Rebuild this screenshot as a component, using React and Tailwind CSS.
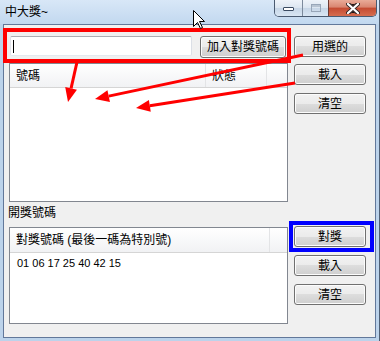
const btn =
  "flex items-center justify-center rounded-[3px] border border-[#707070] bg-[linear-gradient(to_bottom,#f2f2f2_0%,#ebebeb_50%,#dddddd_50%,#cfcfcf_100%)] shadow-[inset_0_0_0_1px_#fcfcfc] text-[12px] leading-none text-black";

function arrowHead(x1, y1, x2, y2, len = 14, half = 6) {
  const dx = x2 - x1;
  const dy = y2 - y1;
  const d = Math.sqrt(dx * dx + dy * dy);
  const ux = dx / d;
  const uy = dy / d;
  const bx = x2 - ux * len;
  const by = y2 - uy * len;
  return {
    base: [bx, by],
    points: `${x2},${y2} ${bx - uy * half},${by + ux * half} ${bx + uy * half},${by - ux * half}`,
  };
}

function Arrow({ from, to }) {
  const head = arrowHead(from[0], from[1], to[0], to[1]);
  return (
    <g>
      <line
        x1={from[0]}
        y1={from[1]}
        x2={head.base[0]}
        y2={head.base[1]}
        stroke="#ff0000"
        strokeWidth="3"
      />
      <polygon points={head.points} fill="#ff0000" />
    </g>
  );
}

function Annotations() {
  return (
    <svg
      className="pointer-events-none absolute left-0 top-0"
      width="380"
      height="341"
      viewBox="0 0 380 341"
    >
      <rect x="5" y="30" width="284" height="31" fill="none" stroke="#ff0000" strokeWidth="4" />
      <rect x="291" y="223" width="81" height="27" fill="none" stroke="#0000ff" strokeWidth="4" />
      <Arrow from={[77, 62]} to={[68, 102]} />
      <Arrow from={[303, 55]} to={[95, 99]} />
      <Arrow from={[295, 83]} to={[136, 108]} />
      {/* mouse pointer */}
      <path
        d="M193.5 10.5 L193.5 26.5 L197.5 22.5 L200.5 28.5 L202.5 27.5 L199.5 21.5 L204.5 21.5 Z"
        fill="#ffffff"
        stroke="#000000"
        strokeWidth="1"
        strokeLinejoin="round"
      />
    </svg>
  );
}

function TitleButtons() {
  return (
    <div className="ml-auto mr-[2px] flex h-[17px] self-start overflow-hidden rounded-b-[5px] border border-t-0 border-[#4a5a70]">
      <div className="flex w-[27px] items-end justify-center bg-[linear-gradient(to_bottom,#eef3f9_0%,#dbe5f0_50%,#c6d5e6_50%,#d9e6f3_100%)] pb-[5px]">
        <div className="h-[4px] w-[11px] rounded-[1px] border border-[#3b4b61] bg-white" />
      </div>
      <div className="flex w-[26px] items-center justify-center border-l border-[#7c8a9c] bg-[linear-gradient(to_bottom,#eef3f9_0%,#dbe5f0_50%,#c6d5e6_50%,#d9e6f3_100%)]">
        <div className="h-[8px] w-[10px] border border-[#98a6b8] shadow-[inset_0_2px_0_#b8c4d2]" />
      </div>
      <div className="flex w-[48px] items-center justify-center border-l border-[#6a3a34] bg-[linear-gradient(to_bottom,#e9ab98_0%,#d98570_45%,#c44a31_50%,#d66d4f_100%)]">
        <svg width="14" height="11" viewBox="0 0 14 11">
          <path
            d="M2 1 L7 4.2 L12 1 M2 10 L7 6.8 L12 10 M2 1 L12 10 M12 1 L2 10"
            stroke="#3a2a28"
            strokeWidth="4"
            strokeLinecap="round"
          />
          <path d="M2 1 L12 10 M12 1 L2 10" stroke="#ffffff" strokeWidth="2.2" strokeLinecap="round" />
        </svg>
      </div>
    </div>
  );
}

export default function App() {
  return (
    <div className="relative flex h-[341px] w-[380px] flex-col overflow-hidden border-r border-[#4f5f75] bg-[#bcd3eb] font-[family-name:'Liberation_Sans','Noto_Sans_CJK_TC',sans-serif]">
      <div className="flex h-[24px] bg-[linear-gradient(to_bottom,#d8e7f7,#c2d8ef)]">
        <div className="flex items-center pl-[5px] text-[12px] text-black">中大獎~</div>
        <TitleButtons />
      </div>

      <div className="flex-1 px-[3px] pb-[3px]">
        <div className="h-full border border-[#62789a] bg-[#f0f0f0] pl-[5px] pt-[11px]">
          {/* top section */}
          <div className="flex gap-[6px]">
            <div className="w-[279px]">
              <div className="flex items-start">
                <div className="ml-px flex h-[20px] w-[182px] items-center rounded-[2px] border border-[#abadb3] border-b-[#e3e9ef] border-l-[#e2e3ea] border-r-[#dbdfe6] bg-white pl-[2px]">
                  <span className="h-[13px] w-px bg-black" />
                </div>
                <button className={`${btn} ml-[8px] h-[22px] w-[86px]`}>加入對獎號碼</button>
              </div>
              <div className="mt-[5px] h-[139px] border border-[#828790] bg-white">
                <div className="flex h-[24px] border-b border-[#d5d5d5] bg-[linear-gradient(to_bottom,#ffffff,#f1f2f4)] text-[12px] text-black">
                  <div className="flex w-[196px] items-center border-r border-[#e3e4e6] pl-[6px]">號碼</div>
                  <div className="flex w-[61px] items-center border-r border-[#e3e4e6] pl-[6px]">狀態</div>
                  <div className="flex-1" />
                </div>
              </div>
            </div>
            <div className="flex flex-col">
              <button className={`${btn} h-[21px] w-[72px]`}>用選的</button>
              <button className={`${btn} mt-[7px] h-[21px] w-[72px]`}>載入</button>
              <button className={`${btn} mt-[8px] h-[21px] w-[72px]`}>清空</button>
            </div>
          </div>

          {/* bottom section */}
          <div className="flex gap-[6px]">
            <div className="w-[279px]">
              <div className="-ml-px mt-[3px] flex h-[16px] items-center text-[12px] text-black">開獎號碼</div>
              <div className="mt-[6px] h-[97px] border border-[#828790] bg-white">
                <div className="flex h-[25px] border-b border-[#d5d5d5] bg-[linear-gradient(to_bottom,#ffffff,#f1f2f4)] text-[12px] text-black">
                  <div className="flex w-[260px] items-center border-r border-[#e3e4e6] pl-[6px]">
                    對獎號碼 (最後一碼為特別號)
                  </div>
                  <div className="flex-1" />
                </div>
                <div className="flex h-[20px] items-center pl-[7px] text-[11px] text-black">
                  01 06 17 25 40 42 15
                </div>
              </div>
            </div>
            <div className="flex flex-col pt-[24px]">
              <button className={`${btn} h-[21px] w-[72px]`}>對獎</button>
              <button className={`${btn} mt-[8px] h-[21px] w-[72px]`}>載入</button>
              <button className={`${btn} mt-[8px] h-[21px] w-[72px]`}>清空</button>
            </div>
          </div>
        </div>
      </div>

      <Annotations />
    </div>
  );
}
